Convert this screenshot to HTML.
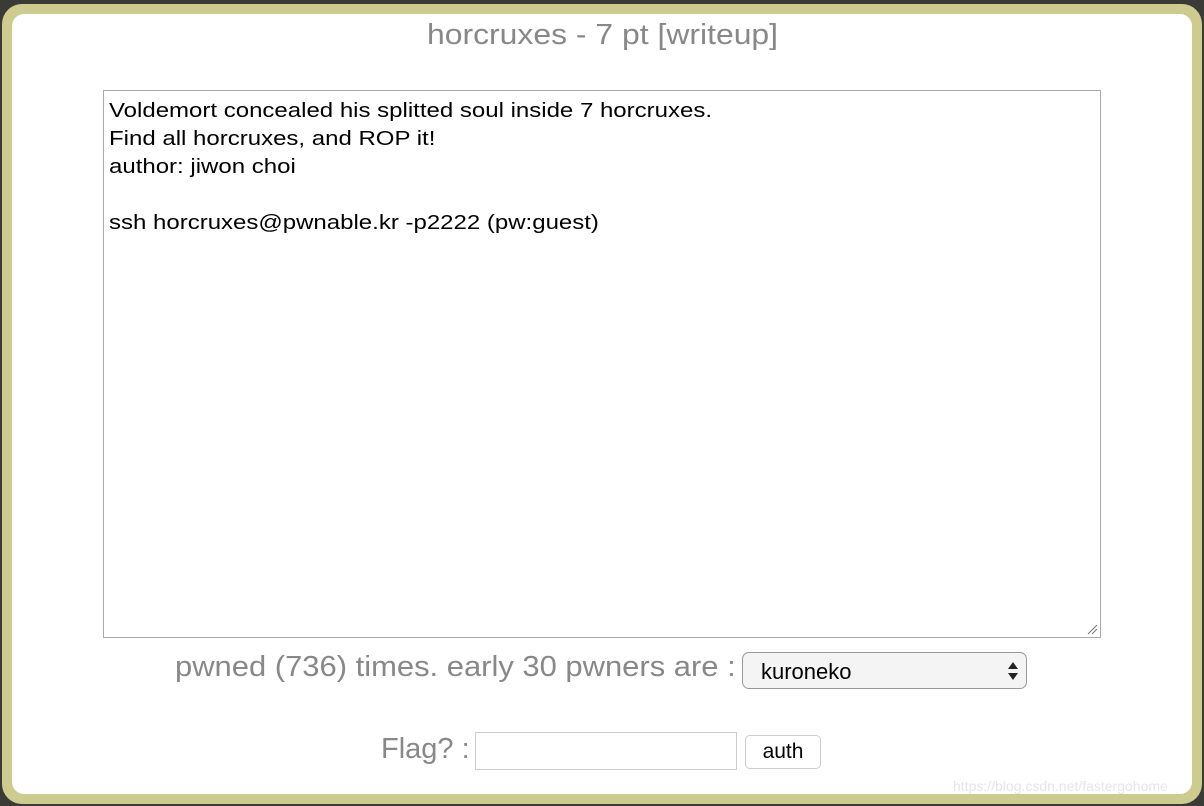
<!DOCTYPE html>
<html><head><style>
body{margin:0;width:1204px;height:806px;background:#3a3a36;position:relative;overflow:hidden;font-family:"Liberation Sans",sans-serif}
.frame{position:absolute;left:2px;top:4px;width:1200px;height:800px;background:#cecb8f;border-radius:20px}
.inner{position:absolute;left:12px;top:14px;width:1180px;height:780px;background:#fff;border-radius:12px}
.t{position:absolute;color:#888;font-size:29px;white-space:nowrap;transform-origin:left top}
.ta{position:absolute;left:103px;top:90px;width:996px;height:546px;border:1px solid #aaa;box-sizing:content-box}
.ta div{position:absolute;left:5px;top:6px;font-size:20px;line-height:28px;color:#000;transform:scaleX(1.2);transform-origin:left top;white-space:nowrap}
.sel{position:absolute;left:742px;top:652px;width:285px;height:37px;border:1px solid #999;border-radius:7px;background:#f4f4f4;box-sizing:border-box}
.sel span{position:absolute;left:18px;top:6px;font-size:22px}
.inp{position:absolute;left:475px;top:732px;width:262px;height:38px;border:1px solid #ccc;box-sizing:border-box}
.btn{position:absolute;left:745px;top:735px;width:76px;height:34px;border:1px solid #ccc;border-radius:5px;box-sizing:border-box;font-size:21px;text-align:center;line-height:32px}
</style></head><body>
<div class="frame"></div><div class="inner"></div>
<div class="t" style="left:427px;top:19px;transform:scaleX(1.1)">horcruxes - 7 pt [writeup]</div>
<div class="ta"><div>Voldemort concealed his splitted soul inside 7 horcruxes.<br>Find all horcruxes, and ROP it!<br>author: jiwon choi<br><br>ssh horcruxes@pwnable.kr -p2222 (pw:guest)</div>
<svg style="position:absolute;right:2px;bottom:2px" width="12" height="12"><path d="M2 11L11 2M6 11L11 6" stroke="#777" stroke-width="1"/></svg></div>
<div class="t" style="left:175px;top:651px;transform:scaleX(1.067)">pwned (736) times. early 30 pwners are :</div>
<div class="sel"><span>kuroneko</span><svg style="position:absolute;right:8px;top:9px" width="10" height="18"><path d="M5 0L10 7H0Z M5 18L10 11H0Z" fill="#222"/></svg></div>
<div class="t" style="left:381px;top:733px">Flag? :</div>
<div class="inp"></div>
<div class="btn">auth</div>
<div style="position:absolute;left:953px;top:778px;color:#e6e6e6;font-size:14px">https://blog.csdn.net/fastergohome</div>
</body></html>
